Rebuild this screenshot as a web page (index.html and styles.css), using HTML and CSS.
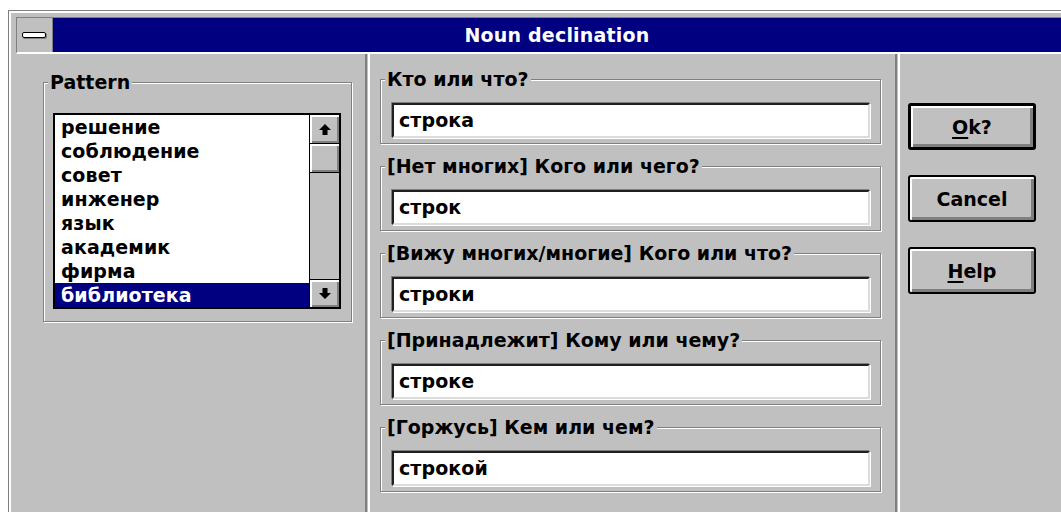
FILE: index.html
```html
<!DOCTYPE html>
<html lang="en">
<head>
<meta charset="utf-8">
<title>Noun declination</title>
<link rel="stylesheet" href="styles.css">
</head>
<body>
<div class="window">
  <div class="titlebar">
    <div class="sysmenu"><span class="sysmenu-bar"></span></div>
    <div class="caption">Noun declination</div>
  </div>
  <div class="client">
    <div class="col col-pattern">
      <fieldset class="group group-pattern">
        <legend>Pattern</legend>
        <div class="listbox">
          <ul class="items">
            <li>решение</li>
            <li>соблюдение</li>
            <li>совет</li>
            <li>инженер</li>
            <li>язык</li>
            <li>академик</li>
            <li>фирма</li>
            <li class="selected">библиотека</li>
          </ul>
          <div class="scrollbar">
            <div class="sb-btn sb-up">
              <svg width="12" height="11" viewBox="0 0 12 11"><polygon points="6,0 12,6 8.5,6 8.5,11 3.5,11 3.5,6 0,6" fill="#000"/></svg>
            </div>
            <div class="sb-thumb"></div>
            <div class="sb-track"></div>
            <div class="sb-btn sb-down">
              <svg width="12" height="11" viewBox="0 0 12 11"><polygon points="6,11 12,5 8.5,5 8.5,0 3.5,0 3.5,5 0,5" fill="#000"/></svg>
            </div>
          </div>
        </div>
      </fieldset>
    </div>
    <div class="divider"></div>
    <div class="col col-forms">
      <fieldset class="group group-form">
        <legend>Кто или что?</legend>
        <div class="field">строка</div>
      </fieldset>
      <fieldset class="group group-form">
        <legend>[Нет многих] Кого или чего?</legend>
        <div class="field">строк</div>
      </fieldset>
      <fieldset class="group group-form">
        <legend>[Вижу многих/многие] Кого или что?</legend>
        <div class="field">строки</div>
      </fieldset>
      <fieldset class="group group-form">
        <legend>[Принадлежит] Кому или чему?</legend>
        <div class="field">строке</div>
      </fieldset>
      <fieldset class="group group-form">
        <legend>[Горжусь] Кем или чем?</legend>
        <div class="field">строкой</div>
      </fieldset>
    </div>
    <div class="divider"></div>
    <div class="col col-buttons">
      <button class="btn btn-default"><u>O</u>k?</button>
      <button class="btn">Cancel</button>
      <button class="btn"><u>H</u>elp</button>
    </div>
  </div>
</div>
</body>
</html>
```

FILE: styles.css
```css
html, body {
  margin: 0;
  padding: 0;
  background: #fff;
}

body {
  font-family: "DejaVu Sans", Verdana, sans-serif;
  font-weight: bold;
  font-size: 19px;
  color: #000;
  overflow: hidden;
}

/* dialog frame */
.window {
  margin: 10px 0 0 8px;
  width: 1053px;
  height: 502px;
  box-sizing: border-box;
  border-top: 1px solid #808080;
  border-left: 1px solid #808080;
  box-shadow: inset 2px 2px 0 #fff;
  background: #c0c0c0;
  display: flex;
  flex-direction: column;
  overflow: hidden;
}

.titlebar {
  margin: 6px 0 0 7px;
  height: 34px;
  display: flex;
  border-top: 1px solid #808080;
  border-left: 1px solid #808080;
  border-bottom: 2px solid #fff;
  flex: none;
}

.sysmenu {
  width: 35px;
  border-right: 1px solid #808080;
  background: #c0c0c0;
  display: flex;
  align-items: center;
  justify-content: center;
}

.sysmenu-bar {
  width: 22px;
  height: 4px;
  border: 1px solid #000;
  border-radius: 2px;
  background: #fff;
  box-shadow: 1px 1px 0 #808080;
  margin-left: -2px;
}

.caption {
  flex: 1;
  background: #000080;
  color: #fff;
  display: flex;
  align-items: center;
  justify-content: center;
  letter-spacing: 0.2px;
}

/* client area: three columns split by etched rules */
.client {
  flex: 1;
  display: flex;
  min-height: 0;
}

.divider {
  width: 1px;
  border-left: 2px solid #808080;
  border-right: 2px solid #fff;
  flex: none;
}

.col-pattern {
  width: 356px;
  flex: none;
  padding: 18px 0 0 34px;
  box-sizing: border-box;
}

.col-forms {
  width: 525px;
  flex: none;
  padding: 15px 0 0 10px;
  box-sizing: border-box;
  display: flex;
  flex-direction: column;
  gap: 12px;
}

.col-buttons {
  flex: 1;
  padding: 49px 0 0 8px;
  display: flex;
  flex-direction: column;
  gap: 25px;
}

/* etched group boxes */
.group {
  margin: 0;
  padding: 0;
  border: 1px solid #808080;
  box-shadow: 1px 1px 0 #fff, inset 1px 1px 0 #fff;
  box-sizing: border-box;
  min-width: 0;
}

.group legend {
  margin-left: 4px;
  padding: 0 2px;
  line-height: 20px;
  background: #c0c0c0;
  white-space: nowrap;
}

.group-pattern {
  width: 309px;
  padding-bottom: 12px;
}

.group-form {
  width: 501px;
  padding-bottom: 5px;
}

/* list box */
.listbox {
  margin: 21px 0 0 9px;
  width: 288px;
  height: 196px;
  box-sizing: border-box;
  border: 2px solid #000;
  display: flex;
  background: #fff;
}

.items {
  list-style: none;
  margin: 0;
  padding: 0;
  flex: 1;
  overflow: hidden;
}

.items li {
  height: 24px;
  line-height: 24px;
  padding-left: 6px;
  letter-spacing: 0.1px;
}

.items li.selected {
  background: #000080;
  color: #fff;
}

.scrollbar {
  width: 29px;
  border-left: 1px solid #000;
  background: #c0c0c0;
  display: flex;
  flex-direction: column;
}

.sb-btn,
.sb-thumb {
  height: 29px;
  box-sizing: border-box;
  background: #c0c0c0;
  box-shadow: inset 2px 2px 0 #fff, inset -2px -2px 0 #808080;
  display: flex;
  align-items: center;
  justify-content: center;
  flex: none;
}

.sb-up,
.sb-thumb {
  border-bottom: 1px solid #000;
}

.sb-down {
  border-top: 1px solid #000;
  height: 28px;
}

.sb-track {
  flex: 1;
}

/* edit fields */
.field {
  margin: 14px 0 0 11px;
  width: 478px;
  height: 35px;
  box-sizing: border-box;
  background: #fff;
  border-style: solid;
  border-width: 2px;
  border-color: #202020 #dcdcdc #dcdcdc #202020;
  box-shadow: -1px -1px 0 #808080, 1px 1px 0 #fff;
  padding-left: 5px;
  line-height: 31px;
  letter-spacing: 0.1px;
}

/* push buttons */
.btn {
  width: 128px;
  height: 47px;
  box-sizing: border-box;
  border: 2px solid #000;
  border-radius: 3px;
  background: #c0c0c0;
  box-shadow: inset 2px 2px 0 #fff, inset -3px -3px 0 #808080;
  font: inherit;
  color: #000;
  padding: 0;
  cursor: default;
}

.btn-default {
  border-width: 3px;
}

.btn u {
  text-decoration-thickness: 2px;
  text-underline-offset: 3px;
}
```
